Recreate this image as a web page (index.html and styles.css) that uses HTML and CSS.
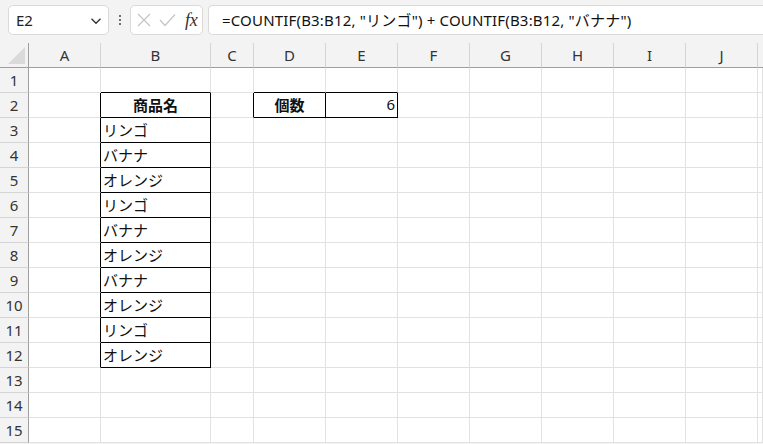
FILE: index.html
```html
<!DOCTYPE html>
<html lang="ja">
<head>
<meta charset="utf-8">
<link rel="stylesheet" href="styles.css">
</head>
<body>
<div class="app">
  <div class="toolbar">
    <div class="namebox">
      <span class="ref">E2</span>
      <svg class="chev" width="12" height="8" viewBox="0 0 12 8"><path d="M1.5 1.8 L6 6.2 L10.5 1.8" fill="none" stroke="#333" stroke-width="1.4"/></svg>
    </div>
    <div class="dots"><span></span><span></span><span></span></div>
    <div class="fxbox">
      <svg width="14" height="14" viewBox="0 0 14 14"><path d="M1 1 L13 13 M13 1 L1 13" stroke="#c6c6c6" stroke-width="1.3" fill="none"/></svg>
      <svg width="17" height="14" viewBox="0 0 17 14"><path d="M1 7 L6 12.5 L16 1.5" stroke="#c6c6c6" stroke-width="1.3" fill="none"/></svg>
      <span class="fx">fx</span>
    </div>
    <div class="formula">=COUNTIF(B3:B12, "リンゴ") + COUNTIF(B3:B12, "バナナ")</div>
  </div>
  <div class="sheet">
    <div class="corner"><div class="tri"></div></div>
    <div class="ch">A</div><div class="ch">B</div><div class="ch">C</div><div class="ch">D</div><div class="ch">E</div><div class="ch">F</div><div class="ch">G</div><div class="ch">H</div><div class="ch">I</div><div class="ch">J</div><div class="ch last"></div>

    <div class="rh">1</div><div class="c"></div><div class="c bb"></div><div class="c"></div><div class="c bb"></div><div class="c bb"></div><div class="c"></div><div class="c"></div><div class="c"></div><div class="c"></div><div class="c"></div><div class="c"></div>
    <div class="rh">2</div><div class="c br"></div><div class="c br bb hd">商品名</div><div class="c br"></div><div class="c br bb hd">個数</div><div class="c br bb num">6</div><div class="c"></div><div class="c"></div><div class="c"></div><div class="c"></div><div class="c"></div><div class="c"></div>
    <div class="rh">3</div><div class="c br"></div><div class="c br bb">リンゴ</div><div class="c"></div><div class="c"></div><div class="c"></div><div class="c"></div><div class="c"></div><div class="c"></div><div class="c"></div><div class="c"></div><div class="c"></div>
    <div class="rh">4</div><div class="c br"></div><div class="c br bb">バナナ</div><div class="c"></div><div class="c"></div><div class="c"></div><div class="c"></div><div class="c"></div><div class="c"></div><div class="c"></div><div class="c"></div><div class="c"></div>
    <div class="rh">5</div><div class="c br"></div><div class="c br bb">オレンジ</div><div class="c"></div><div class="c"></div><div class="c"></div><div class="c"></div><div class="c"></div><div class="c"></div><div class="c"></div><div class="c"></div><div class="c"></div>
    <div class="rh">6</div><div class="c br"></div><div class="c br bb">リンゴ</div><div class="c"></div><div class="c"></div><div class="c"></div><div class="c"></div><div class="c"></div><div class="c"></div><div class="c"></div><div class="c"></div><div class="c"></div>
    <div class="rh">7</div><div class="c br"></div><div class="c br bb">バナナ</div><div class="c"></div><div class="c"></div><div class="c"></div><div class="c"></div><div class="c"></div><div class="c"></div><div class="c"></div><div class="c"></div><div class="c"></div>
    <div class="rh">8</div><div class="c br"></div><div class="c br bb">オレンジ</div><div class="c"></div><div class="c"></div><div class="c"></div><div class="c"></div><div class="c"></div><div class="c"></div><div class="c"></div><div class="c"></div><div class="c"></div>
    <div class="rh">9</div><div class="c br"></div><div class="c br bb">バナナ</div><div class="c"></div><div class="c"></div><div class="c"></div><div class="c"></div><div class="c"></div><div class="c"></div><div class="c"></div><div class="c"></div><div class="c"></div>
    <div class="rh">10</div><div class="c br"></div><div class="c br bb">オレンジ</div><div class="c"></div><div class="c"></div><div class="c"></div><div class="c"></div><div class="c"></div><div class="c"></div><div class="c"></div><div class="c"></div><div class="c"></div>
    <div class="rh">11</div><div class="c br"></div><div class="c br bb">リンゴ</div><div class="c"></div><div class="c"></div><div class="c"></div><div class="c"></div><div class="c"></div><div class="c"></div><div class="c"></div><div class="c"></div><div class="c"></div>
    <div class="rh">12</div><div class="c br"></div><div class="c br bb">オレンジ</div><div class="c"></div><div class="c"></div><div class="c"></div><div class="c"></div><div class="c"></div><div class="c"></div><div class="c"></div><div class="c"></div><div class="c"></div>
    <div class="rh">13</div><div class="c"></div><div class="c"></div><div class="c"></div><div class="c"></div><div class="c"></div><div class="c"></div><div class="c"></div><div class="c"></div><div class="c"></div><div class="c"></div><div class="c"></div>
    <div class="rh">14</div><div class="c"></div><div class="c"></div><div class="c"></div><div class="c"></div><div class="c"></div><div class="c"></div><div class="c"></div><div class="c"></div><div class="c"></div><div class="c"></div><div class="c"></div>
    <div class="rh">15</div><div class="c"></div><div class="c"></div><div class="c"></div><div class="c"></div><div class="c"></div><div class="c"></div><div class="c"></div><div class="c"></div><div class="c"></div><div class="c"></div><div class="c"></div>
  </div>
</div>
</body>
</html>
```

FILE: styles.css
```css
* { box-sizing: border-box; }
html, body { margin: 0; padding: 0; }
body {
  width: 763px;
  height: 444px;
  overflow: hidden;
  background: #f3f3f3;
  font-family: "Noto Sans", "Noto Sans CJK JP", sans-serif;
  color: #222;
}
.app { display: flex; flex-direction: column; }
.toolbar {
  height: 43px;
  display: flex;
  align-items: flex-start;
  padding: 5px 0 0 8px;
  overflow: hidden;
}
.namebox {
  width: 101px;
  height: 30px;
  flex: none;
  background: #fff;
  border: 1px solid #d9d9d9;
  border-radius: 5px;
  display: flex;
  align-items: center;
  justify-content: space-between;
  padding: 0 6px 0 7px;
}
.ref { font-size: 15px; color: #222; }
.chev { margin-top: 1px; }
.dots {
  width: 21px;
  height: 30px;
  flex: none;
  display: flex;
  flex-direction: column;
  align-items: center;
  justify-content: center;
  gap: 2px;
}
.dots span { width: 2px; height: 2px; background: #444; border-radius: 1px; }
.fxbox {
  width: 73px;
  height: 30px;
  flex: none;
  background: #fff;
  border: 1px solid #d9d9d9;
  border-radius: 5px;
  display: flex;
  align-items: center;
  padding: 0 0 0 6px;
  gap: 8px;
}
.fx {
  font-family: "Liberation Serif", serif;
  font-style: italic;
  font-size: 18px;
  color: #333;
  margin-left: 1px;
  letter-spacing: -0.3px;
}
.formula {
  flex: none;
  width: 570px;
  height: 30px;
  margin-left: 5px;
  background: #fff;
  border: 1px solid #d9d9d9;
  border-right: none;
  border-radius: 5px 0 0 5px;
  font-size: 15px;
  line-height: 28px;
  padding-left: 13px;
  letter-spacing: 0.18px;
  color: #111;
  white-space: nowrap;
}
.sheet {
  display: grid;
  grid-template-columns: 29px 72px 110px 43px 72px 72px 72px 72px 72px 72px 72px 1fr;
  grid-template-rows: 25px repeat(15, 25px);
  background: #fff;
}
.corner {
  background: #f3f3f3;
  border-right: 1px solid #9e9e9e;
  border-bottom: 1px solid #9e9e9e;
  position: relative;
}
.tri {
  position: absolute;
  left: 8px;
  top: 4px;
  width: 17px;
  height: 17px;
  background: #dadada;
  clip-path: polygon(100% 0, 100% 100%, 0 100%);
}
.ch {
  background: #f3f3f3;
  border-right: 1px solid #d4d4d4;
  border-bottom: 1px solid #9e9e9e;
  font-size: 15px;
  color: #333;
  text-align: center;
  line-height: 24px;
}
.ch.last { border-right: none; }
.rh {
  background: #f3f3f3;
  border-right: 1px solid #9e9e9e;
  border-bottom: 1px solid #d4d4d4;
  font-size: 15px;
  color: #333;
  text-align: center;
  line-height: 24px;
}
.c {
  border-right: 1px solid #e1e1e1;
  border-bottom: 1px solid #e1e1e1;
  font-family: "Noto Sans CJK JP", sans-serif;
  font-size: 15px;
  line-height: 23px;
  padding: 0 2px;
  color: #111;
  white-space: nowrap;
  overflow: hidden;
}
.c.br { border-right-color: #000; }
.c.bb { border-bottom-color: #000; }
.c.hd { font-weight: bold; text-align: center; }
.c.num { text-align: right; font-family: "Noto Sans", sans-serif; }
```
